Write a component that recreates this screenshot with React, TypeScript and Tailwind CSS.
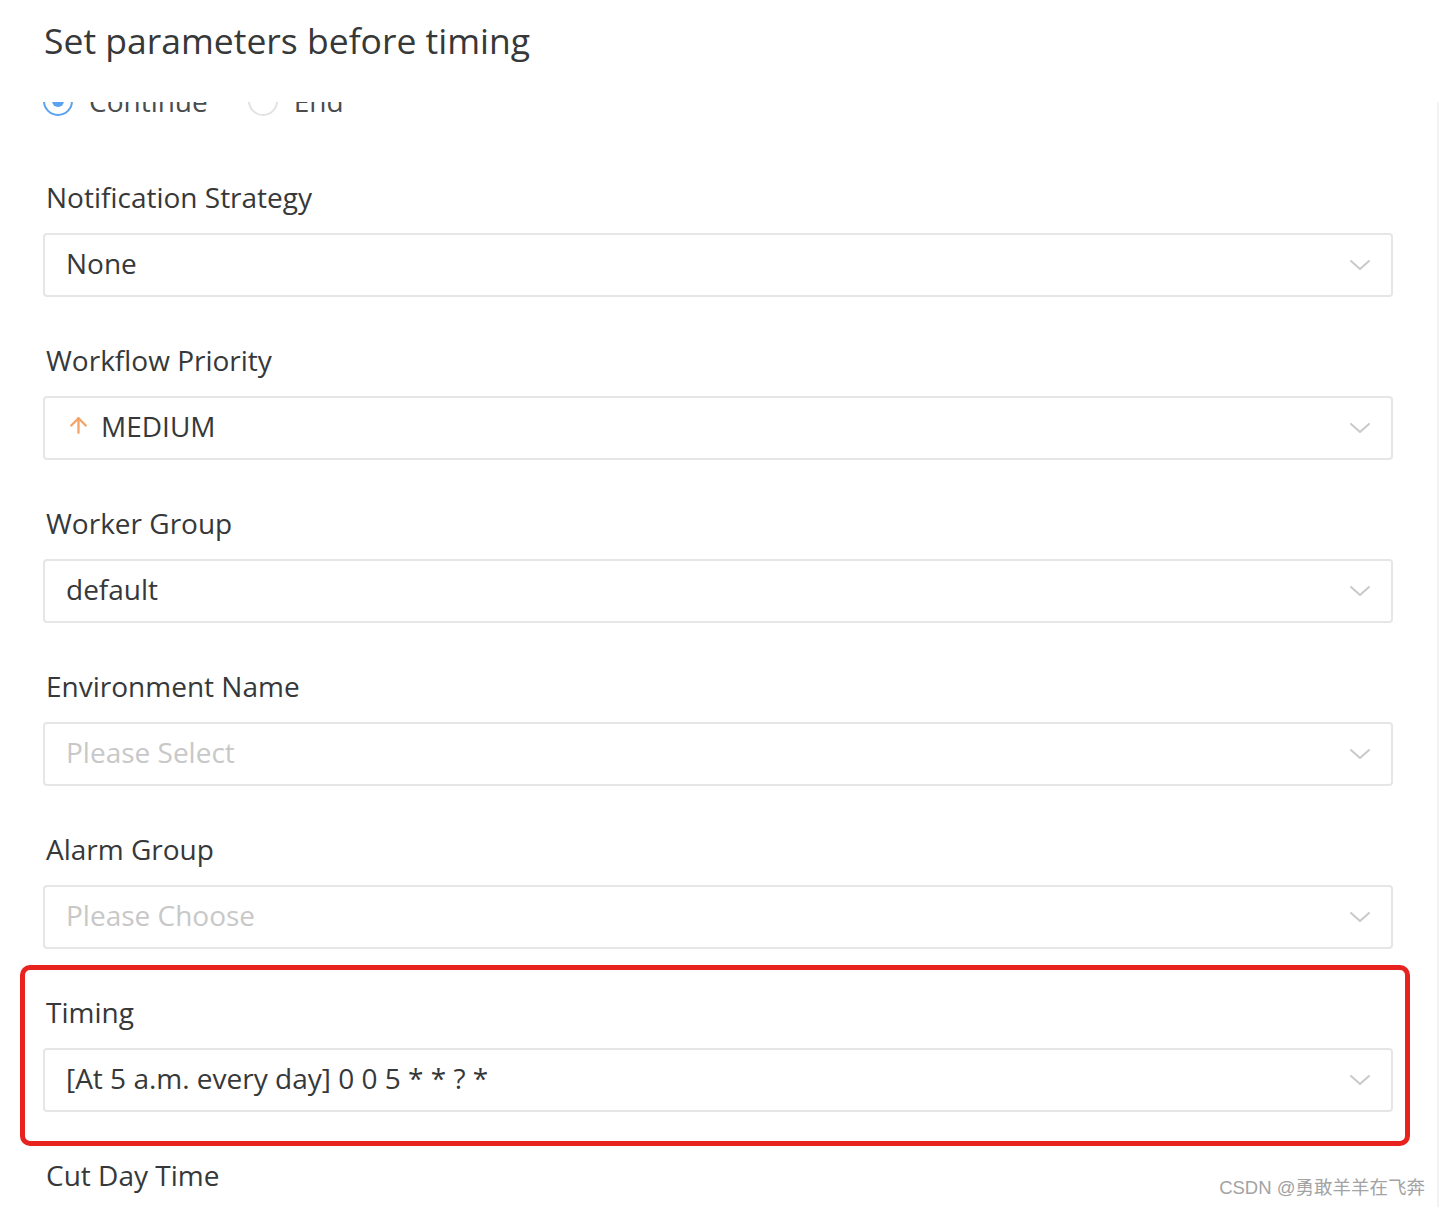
import { ArrowUp } from "lucide-react"

function Chevron() {
  return (
    <svg width="22" height="12" viewBox="0 0 22 12" fill="none" className="shrink-0">
      <path d="M2 2l9 8 9-8" stroke="#c9c9c9" strokeWidth="2" strokeLinecap="round" strokeLinejoin="round" />
    </svg>
  )
}

function Field({
  label,
  value,
  placeholder,
  icon,
}: {
  label: string
  value?: string
  placeholder?: string
  icon?: React.ReactNode
}) {
  return (
    <div className="flex flex-col">
      <div className="h-[40px] pl-[3px] text-[28px] leading-[40px] text-[#363839]">{label}</div>
      <div className="mt-4 flex h-[64px] items-center justify-between rounded-[4px] border-2 border-[#e6e6e6] bg-white pl-[21px] pr-[20px]">
        <div className="flex items-center gap-[10px] pb-[5px] text-[28px] leading-none">
          {icon}
          {value ? (
            <span className="text-[#363839]">{value}</span>
          ) : (
            <span className="text-[#c8c8c8]">{placeholder}</span>
          )}
        </div>
        <Chevron />
      </div>
    </div>
  )
}

export default function App() {
  return (
    <div
      className="relative h-[1207px] w-[1440px] overflow-hidden bg-white"
      style={{ fontFamily: '"Open Sans", "Noto Sans CJK SC", sans-serif' }}
    >
      <div className="absolute right-0 top-[100px] bottom-0 w-[3px] border-l-2 border-[#f3f3f3]" />
      <div className="relative z-10 h-[102px] bg-white pl-[44px] pt-[16px]">
        <h1 className="text-[35.5px] leading-[48px] text-[#363839]">Set parameters before timing</h1>
      </div>
      <div className="pl-[43px] pr-[47px]">
        <div className="-mt-[21px] flex h-[40px] items-center gap-[16px] text-[28px] text-[#4a4c4e]">
          <span className="flex h-[30px] w-[30px] items-center justify-center rounded-full border-2 border-[#5aa2f0]">
            <span className="h-[12px] w-[12px] rounded-full bg-[#5aa2f0]" />
          </span>
          <span>Continue</span>
          <span className="ml-[24px] h-[30px] w-[30px] rounded-full border-2 border-[#e2e2e2]" />
          <span>End</span>
        </div>
        <div className="mt-[56px] flex flex-col gap-[43px]">
          <Field label="Notification Strategy" value="None" />
          <Field
            label="Workflow Priority"
            value="MEDIUM"
            icon={<ArrowUp size={25} strokeWidth={2.2} color="#f3a366" />}
          />
          <Field label="Worker Group" value="default" />
          <Field label="Environment Name" placeholder="Please Select" />
          <Field label="Alarm Group" placeholder="Please Choose" />
          <div className="relative">
            <div className="pointer-events-none absolute -left-[23px] -right-[17px] -top-[27px] -bottom-[34px] rounded-[10px] border-[5px] border-[#e8231f]" />
            <Field label="Timing" value="[At 5 a.m. every day] 0 0 5 * * ? *" />
          </div>
          <div className="h-[40px] pl-[3px] text-[28px] leading-[40px] text-[#363839]">Cut Day Time</div>
        </div>
      </div>
      <div
        className="absolute bottom-[5px] right-[15px] text-[18.5px] text-[#a3a3a3]"
        style={{ fontFamily: '"Liberation Sans", "Noto Sans CJK SC", sans-serif' }}
      >
        CSDN @勇敢羊羊在飞奔
      </div>
    </div>
  )
}
